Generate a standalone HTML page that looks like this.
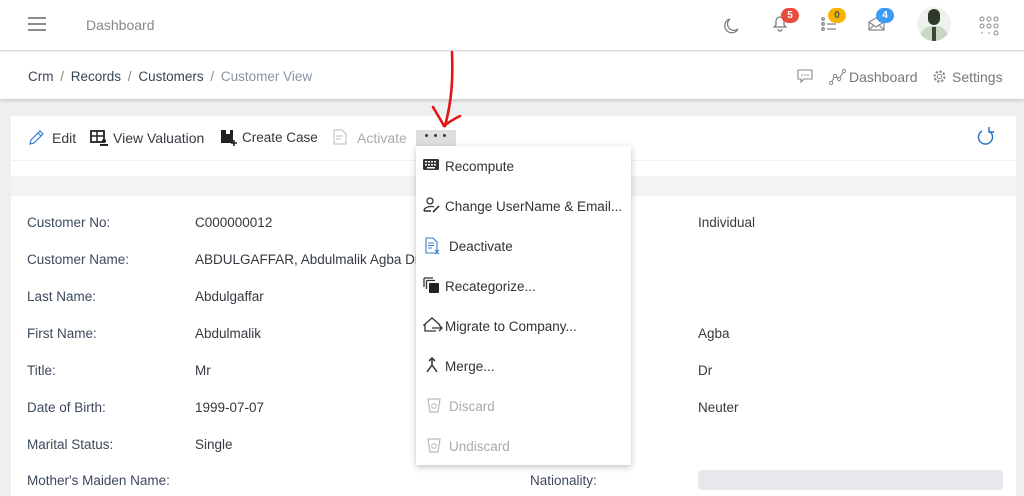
<!DOCTYPE html>
<html><head><meta charset="utf-8"><style>
*{box-sizing:border-box;margin:0;padding:0}
body{width:1024px;height:479px;overflow:hidden;background:#eeeff1;font-family:"Liberation Sans",sans-serif;font-size:13.5px;color:#343a40;position:relative}
.abs{position:absolute;white-space:nowrap}
#hdr{position:absolute;left:0;top:0;width:1024px;height:51px;background:#fff;border-bottom:1px solid #dcdcdc}
#bc{position:absolute;left:0;top:52px;width:1024px;height:47px;background:#fff;box-shadow:0 2px 3px rgba(0,0,0,.15)}
#card{position:absolute;left:11px;top:116px;width:1005px;height:380px;background:#fff}
.band{position:absolute;left:11px;top:176px;width:1005px;height:20px;background:#f1f3f5}
.lbl{color:#3d4a5c}
.badge{position:absolute;width:18px;height:15px;border-radius:8px;color:#fff;font-size:10px;font-weight:bold;text-align:center;line-height:15px}
#dd{position:absolute;left:416px;top:146px;width:215px;height:319px;background:#fff;box-shadow:0 2px 6px rgba(0,0,0,.25)}
.it{position:absolute;left:29px;font-size:13.5px;color:#333}
.ic{position:absolute;left:7px}
.f{top:215px}
</style></head><body>
<div id="hdr"></div>
<svg class="abs" style="left:28px;top:16px" width="18" height="16"><g stroke="#666" stroke-width="1.6"><line x1="0" y1="2" x2="18" y2="2"/><line x1="0" y1="8" x2="18" y2="8"/><line x1="0" y1="14" x2="18" y2="14"/></g></svg>
<div class="abs" style="left:86px;top:17px;color:#888;font-size:14px">Dashboard</div>
<svg class="abs" style="left:722px;top:17px" width="18" height="18"><path d="M8 2 A7 7 0 1 0 16 12 A6 6 0 0 1 8 2Z" fill="none" stroke="#777" stroke-width="1.2"/></svg>
<svg class="abs" style="left:771px;top:14px" width="18" height="18"><path d="M3 13 L15 13 L13 11 L13 7 A4 4 0 0 0 5 7 L5 11Z M7 15 A2 2 0 0 0 11 15" fill="none" stroke="#777" stroke-width="1.2"/></svg>
<div class="badge" style="left:781px;top:8px;background:#e74c3c">5</div>
<svg class="abs" style="left:821px;top:17px" width="16" height="14"><g stroke="#888" stroke-width="1.3" fill="none"><circle cx="2" cy="2" r="1.3"/><circle cx="2" cy="7" r="1.3"/><circle cx="2" cy="12" r="1.3"/><line x1="6" y1="7" x2="15" y2="7"/><line x1="6" y1="12" x2="15" y2="12"/></g></svg>
<div class="badge" style="left:828px;top:8px;background:#f4b400;color:#555">0</div>
<svg class="abs" style="left:868px;top:17px" width="17" height="14"><path d="M1 5 L8 1 L16 5 L16 13 L1 13Z M1 5 L8 10 L16 5 M1 13 L6 8 M16 13 L11 8" fill="none" stroke="#888" stroke-width="1.2"/></svg>
<div class="badge" style="left:876px;top:8px;background:#3b9cf5">4</div>
<div class="abs" style="left:917px;top:7px;width:34px;height:34px;border-radius:50%;background:#eef2ec;overflow:hidden"><div style="position:absolute;left:11px;top:2px;width:12px;height:16px;border-radius:6px;background:#2d3a2a"></div><div style="position:absolute;left:3px;top:19px;width:28px;height:16px;border-radius:12px 12px 0 0;background:#c9d7c4"></div><div style="position:absolute;left:15px;top:20px;width:4px;height:14px;background:#3a4536"></div></div>
<svg class="abs" style="left:979px;top:16px" width="20" height="20"><g fill="none" stroke="#888" stroke-width="1"><circle cx="3" cy="3" r="2"/><circle cx="10" cy="3" r="2"/><circle cx="17" cy="3" r="2"/><circle cx="3" cy="10" r="2"/><circle cx="10" cy="10" r="2"/><circle cx="17" cy="10" r="2"/><circle cx="17" cy="17" r="2"/></g><g fill="#888"><circle cx="3" cy="17" r=".8"/><circle cx="10" cy="17" r=".8"/></g></svg>

<div id="bc"></div>
<div class="abs" style="left:28px;top:69px;font-size:13.5px;color:#3a4555">Crm <span style="color:#888;margin:0 3px">/</span> Records <span style="color:#888;margin:0 3px">/</span> Customers <span style="color:#888;margin:0 3px">/</span> <span style="color:#8a94a0">Customer View</span></div>
<svg class="abs" style="left:797px;top:69px" width="16" height="14"><path d="M1 1 H15 V10 H7 L4 13 V10 H1Z" fill="none" stroke="#888" stroke-width="1.1"/><g fill="#888"><circle cx="5" cy="6" r=".8"/><circle cx="8" cy="6" r=".8"/><circle cx="11" cy="6" r=".8"/></g></svg>
<svg class="abs" style="left:829px;top:68px" width="18" height="17"><path d="M2 15 L6 8 L10 11 L15 3" fill="none" stroke="#888" stroke-width="1.1"/><g fill="#fff" stroke="#888"><circle cx="2" cy="15" r="1.6"/><circle cx="6" cy="8" r="1.6"/><circle cx="10" cy="11" r="1.6"/><circle cx="15" cy="3" r="1.6"/></g></svg>
<div class="abs" style="left:849px;top:69px;font-size:14px;color:#777">Dashboard</div>
<svg class="abs" style="left:932px;top:69px" width="15" height="15"><circle cx="7.5" cy="7.5" r="5" fill="none" stroke="#888" stroke-width="2.2" stroke-dasharray="2.2 1.7"/><circle cx="7.5" cy="7.5" r="2.2" fill="none" stroke="#888"/></svg>
<div class="abs" style="left:952px;top:69px;font-size:14px;color:#777">Settings</div>

<div id="card"></div>
<svg class="abs" style="left:28px;top:129px" width="16" height="17"><path d="M2 15 L3 11 L12 2 L15 5 L6 14Z M10 4 L13 7" fill="none" stroke="#3a7bd5" stroke-width="1.2"/></svg>
<div class="abs" style="left:52px;top:130px;font-size:14px">Edit</div>
<svg class="abs" style="left:90px;top:130px" width="18" height="16"><rect x="1" y="1" width="13" height="11" fill="none" stroke="#222" stroke-width="1.8"/><line x1="1" y1="6" x2="14" y2="6" stroke="#222" stroke-width="1.5"/><line x1="7" y1="1" x2="7" y2="12" stroke="#222" stroke-width="1.5"/><circle cx="14" cy="11" r="2" fill="#222"/><rect x="10" y="14" width="8" height="2" fill="#222"/></svg>
<div class="abs" style="left:113px;top:130px;font-size:14px">View Valuation</div>
<svg class="abs" style="left:220px;top:129px" width="18" height="18"><path d="M1 1 H6 V5 H10 V1 H13 V14 H1Z" fill="#222"/><path d="M14 11 V17 M11 14 H17" stroke="#222" stroke-width="1.6"/></svg>
<div class="abs" style="left:242px;top:130px;font-size:13.5px">Create Case</div>
<svg class="abs" style="left:333px;top:129px" width="14" height="17"><path d="M1 1 H9 L13 5 V15 H1Z" fill="none" stroke="#bbb"/><g stroke="#bbb"><line x1="3" y1="7" x2="10" y2="7"/><line x1="3" y1="10" x2="8" y2="10"/></g></svg>
<div class="abs" style="left:357px;top:130px;font-size:14px;color:#aaa">Activate</div>
<div class="abs" style="left:416px;top:130px;width:40px;height:16px;background:#dedede;text-align:center;font-size:11px;line-height:12px;color:#333;letter-spacing:1px">• • •</div>
<svg class="abs" style="left:976px;top:127px" width="20" height="20"><path d="M13 4 A7 7 0 1 1 6 4" fill="none" stroke="#2a73c9" stroke-width="1.5"/><path d="M13 0 L13 5 L18 5" fill="none" stroke="#2a73c9" stroke-width="1.5"/></svg>

<div class="abs" style="left:11px;top:160px;width:1005px;height:1px;background:#f0f1f3"></div>
<div class="band"></div>

<div class="abs lbl" style="left:27px;top:215px">Customer No:</div><div class="abs" style="left:195px;top:215px">C000000012</div>
<div class="abs lbl" style="left:27px;top:252px">Customer Name:</div><div class="abs" style="left:195px;top:252px">ABDULGAFFAR, Abdulmalik Agba Dr</div>
<div class="abs lbl" style="left:27px;top:289px">Last Name:</div><div class="abs" style="left:195px;top:289px">Abdulgaffar</div>
<div class="abs lbl" style="left:27px;top:326px">First Name:</div><div class="abs" style="left:195px;top:326px">Abdulmalik</div>
<div class="abs lbl" style="left:27px;top:363px">Title:</div><div class="abs" style="left:195px;top:363px">Mr</div>
<div class="abs lbl" style="left:27px;top:400px">Date of Birth:</div><div class="abs" style="left:195px;top:400px">1999-07-07</div>
<div class="abs lbl" style="left:27px;top:437px">Marital Status:</div><div class="abs" style="left:195px;top:437px">Single</div>
<div class="abs lbl" style="left:27px;top:473px">Mother's Maiden Name:</div>
<div class="abs lbl" style="left:530px;top:473px">Nationality:</div>
<div class="abs" style="left:698px;top:215px">Individual</div>
<div class="abs" style="left:698px;top:326px">Agba</div>
<div class="abs" style="left:698px;top:363px">Dr</div>
<div class="abs" style="left:698px;top:400px">Neuter</div>
<div class="abs" style="left:698px;top:470px;width:305px;height:20px;background:#e6e8eb;border-radius:4px"></div>

<div id="dd">
<svg class="ic" style="top:13px" width="16" height="12"><rect x="0" y="0" width="16" height="11" rx="1.5" fill="#333"/><g fill="#fff"><rect x="2" y="2" width="2" height="1.5"/><rect x="5" y="2" width="2" height="1.5"/><rect x="8" y="2" width="2" height="1.5"/><rect x="11" y="2" width="2" height="1.5"/><rect x="2" y="5" width="2" height="1.5"/><rect x="5" y="5" width="2" height="1.5"/><rect x="8" y="5" width="2" height="1.5"/><rect x="11" y="5" width="2" height="1.5"/><rect x="4" y="8" width="8" height="1.5"/></g></svg>
<div class="it" style="top:13px">Recompute</div>
<svg class="ic" style="top:51px" width="18" height="16"><circle cx="7" cy="4" r="3" fill="none" stroke="#333" stroke-width="1.3"/><path d="M1 14 C1 9 10 9 11 10" fill="none" stroke="#333" stroke-width="1.3"/><path d="M1 14 H8 M10 15 L16 9" stroke="#333" stroke-width="1.6"/></svg>
<div class="it" style="top:53px">Change UserName &amp; Email...</div>
<svg class="ic" style="top:91px;left:9px" width="15" height="18"><path d="M1 1 H8 L12 5 V16 H1Z" fill="none" stroke="#3a7bd5" stroke-width="1.1"/><g stroke="#3a7bd5"><line x1="3" y1="6" x2="9" y2="6"/><line x1="3" y1="8.5" x2="9" y2="8.5"/><line x1="3" y1="11" x2="7" y2="11"/><path d="M10 13 L14 17 M14 13 L10 17"/></g></svg>
<div class="it" style="top:93px;left:33px">Deactivate</div>
<svg class="ic" style="top:131px" width="17" height="17"><path d="M1 1 H10 M1 1 V10 M3.5 3.5 H12 M3.5 3.5 V12" fill="none" stroke="#333" stroke-width="1.3"/><rect x="6" y="6" width="10" height="10" rx="1" fill="#222"/></svg>
<div class="it" style="top:133px">Recategorize...</div>
<svg class="ic" style="top:171px" width="20" height="17"><path d="M13 14 H2 V8 L1 8 L9 1 L17 8" fill="none" stroke="#333" stroke-width="1.3"/><path d="M9 11 H19 M16 8 L19 11 L16 14" fill="none" stroke="#333" stroke-width="1.3"/></svg>
<div class="it" style="top:173px">Migrate to Company...</div>
<svg class="ic" style="top:211px;left:9px" width="14" height="16"><path d="M7 1 V8 L2 15 M7 8 L12 15 M4 4 L7 1 L10 4" fill="none" stroke="#333" stroke-width="1.5"/></svg>
<div class="it" style="top:213px">Merge...</div>
<svg class="ic" style="top:251px;left:11px" width="14" height="16"><path d="M1 2 H13 L11 15 H3Z" fill="none" stroke="#bbb" stroke-width="1.2"/><circle cx="7" cy="9" r="2.3" fill="none" stroke="#bbb"/></svg>
<div class="it" style="top:253px;left:33px;color:#aaa">Discard</div>
<svg class="ic" style="top:291px;left:11px" width="14" height="16"><path d="M1 2 H13 L11 15 H3Z" fill="none" stroke="#bbb" stroke-width="1.2"/><circle cx="7" cy="9" r="2.3" fill="none" stroke="#bbb"/></svg>
<div class="it" style="top:293px;left:33px;color:#aaa">Undiscard</div>
</div>

<svg class="abs" style="left:430px;top:48px" width="40" height="84"><path d="M22 4 C23 30 22 52 15 78 M3 59 C7 66 11 72 14 78 C20 73 26 70 30 68" fill="none" stroke="#e21616" stroke-width="2.6" stroke-linecap="round" stroke-linejoin="round"/></svg>
</body></html>
